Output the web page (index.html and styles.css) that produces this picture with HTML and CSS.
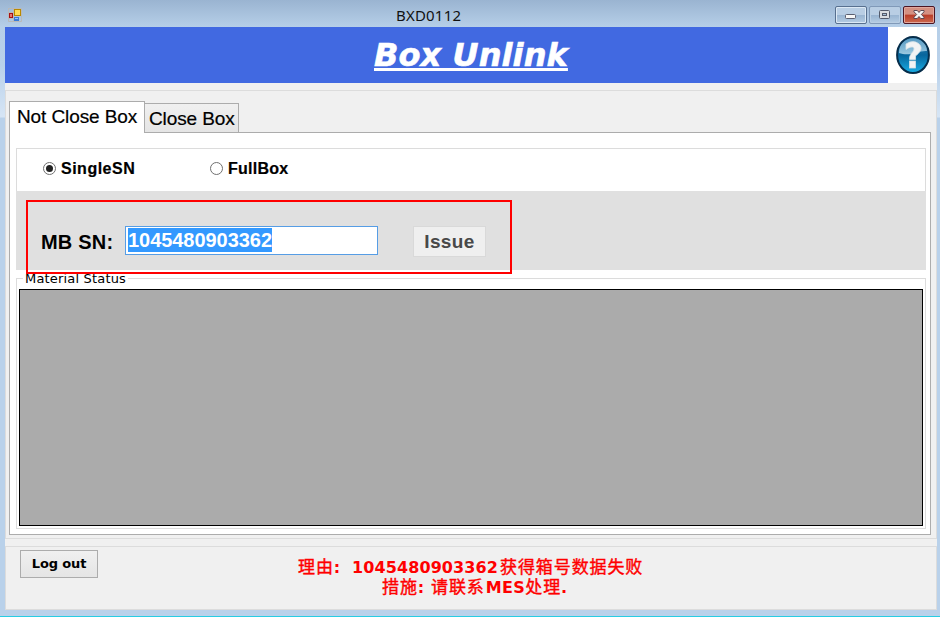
FILE: index.html
```html
<!DOCTYPE html>
<html lang="zh">
<head>
<meta charset="utf-8">
<title>BXD0112</title>
<link rel="stylesheet" href="styles.css">
</head>
<body>
<div class="window">
  <div class="titlebar">
    <svg class="app-icon" width="14" height="14" viewBox="0 0 14 14">
      <path d="M.5 .5h13v13H.5zM5.500 .5v13M.5 4.500h5M.5 10.500h5" fill="none" stroke="#b9b9b9"/>
      <rect x="6.500" y="1.500" width="6" height="6" fill="#ffdc55" stroke="#b98900"/>
      <rect x="1.500" y="5.500" width="3" height="4" fill="#e67a70" stroke="#a80f12"/>
      <rect x="6" y="9" width="5" height="4" fill="#397bd8"/>
      <path d="M7 10.500h3" stroke="#9cc6f5"/>
    </svg>
    <span class="caption">BXD0112</span>
    <div class="controls">
      <span class="control minimize"><svg width="30" height="16" viewBox="0 0 30 16"><rect x="9.500" y="7.500" width="10" height="4" rx="1" fill="#f7f7f7" stroke="#5b5f70"/></svg></span>
      <span class="control maximize"><svg width="30" height="16" viewBox="0 0 30 16"><rect x="9.500" y="3.500" width="10" height="8" rx="1" fill="#d9dce0" stroke="#535a6b"/><rect x="12.500" y="6.500" width="4" height="2" fill="#a9c2da" stroke="#535a6b"/></svg></span>
      <span class="control close"><svg width="30" height="16" viewBox="0 0 30 16"><path d="M10 3.500h3.300l1.700 2 1.700-2H20v1.300L17.300 7.500 20 10.200v1.300h-3.300l-1.700-2-1.700 2H10v-1.300l2.700-2.700L10 4.800z" fill="#f5f5f5" stroke="#5c4853"/></svg></span>
    </div>
  </div>
  <div class="client">
    <header class="banner">
      <h1 class="heading">Box Unlink</h1>
      <div class="help">
        <svg width="34" height="38" viewBox="0 0 34 38">
          <defs>
            <linearGradient id="ball" x1="0" y1="0" x2="0" y2="1"><stop offset="0" stop-color="#4289b5"/><stop offset=".5" stop-color="#07659c"/><stop offset="1" stop-color="#19aee6"/></linearGradient>
            <linearGradient id="shine" x1="0" y1="0" x2="0" y2="1"><stop offset="0" stop-color="#5b9dc5"/><stop offset="1" stop-color="#b6daec"/></linearGradient>
          </defs>
          <ellipse cx="17" cy="19" rx="15.900" ry="18" fill="url(#ball)" stroke="#062d4a" stroke-width="2"/>
          <path d="M3 17C3 8 9 2.500 17 2.500S31 8 31 15C23 14 15 21 3 17z" fill="url(#shine)" opacity=".85"/>
          <path d="M10 8Q17 3.500 22.500 7.500c6 5 0 10-3 12.500v3.500h-6c-.5-5.500 4.500-7.500 4.500-10.500 0-3-4-2.500-8 .5z" fill="#f2f3f4" stroke="#d5e2e9" stroke-width=".8"/>
          <rect x="13.500" y="25" width="6" height="7" fill="#f2f3f4" stroke="#d5e2e9" stroke-width=".8"/>
        </svg>
      </div>
    </header>
    <main class="work">
      <div class="tabs">
        <span class="tab active">Not Close Box</span>
        <span class="tab idle">Close Box</span>
      </div>
      <section class="page">
        <div class="modes">
          <label class="mode"><span class="radio on"></span><span class="mode-text single">SingleSN</span></label>
          <label class="mode"><span class="radio"></span><span class="mode-text">FullBox</span></label>
        </div>
        <div class="entry">
          <span class="entry-label">MB SN:</span>
          <span class="field"><span class="selection">1045480903362</span></span>
          <span class="issue">Issue</span>
          <span class="highlight"></span>
        </div>
        <div class="group">
          <div class="legend"><span class="legend-text">Material Status</span></div>
          <div class="grid"></div>
        </div>
      </section>
    </main>
    <footer class="status">
      <span class="logout">Log out</span>
      <div class="message">
        <div class="line"><span class="prefix">理由<b class="latin">:</b></span><b class="latin">1045480903362</b><span class="cjk">获得箱号数据失败</span></div>
        <div class="line action"><span class="prefix">措施<b class="latin">:</b></span>请联系<b class="latin mes">MES</b>处理<b class="latin">.</b></div>
      </div>
    </footer>
  </div>
</div>
</body>
</html>
```
FILE: styles.css
```css
* { box-sizing: border-box; }
body { margin: 0; color: #000; font-family: "DejaVu Sans", sans-serif; }
.window {
  width: 940px; height: 617px; padding: 0 3px 6px 5px; overflow: hidden;
  border-bottom: 1px solid #27cce2;
  background: linear-gradient(#9ab4d1 0, #b6cfe8 27px, #b9d1ea 65px, #d6e5f5 117px, #b9d1ea 118px);
  white-space: nowrap;
}
.titlebar { height: 27px; display: flex; }
.app-icon { margin: 8px 0 0 3px; flex: none; }
.caption { margin-left: 374px; padding-top: 5px; font: 15px/21px "Noto Sans", sans-serif; width: 68px; color: #111; letter-spacing: .2px; }
.controls { display: flex; margin: 6px 2px 0 auto; gap: 2px; height: 18px; }
.control { border: 1px solid #58708f; border-radius: 2px; width: 32px; box-shadow: inset 0 0 0 1px #dce9f5; background: linear-gradient(#b9cee4 48%, #98b4d1 50%, #b5cce3); }
.control svg { display: block; }
.maximize { border-color: #8099b8; box-shadow: inset 0 0 0 1px #b9cee3; }
.close { border-color: #4c1523; box-shadow: inset 0 0 0 1px #e1a89e; background: linear-gradient(#d49082 45%, #b93c28 50%, #cd6a4f); }
.client { height: 583px; background: #f0f0f0; }
.banner { height: 56px; display: flex; background: #4169e1; }
.heading { margin: 0; width: 883px; padding-left: 369px; color: #fff; font: italic bold 32px/56px "DejaVu Sans", sans-serif; letter-spacing: .1px; -webkit-text-stroke: .6px #fff; text-decoration: underline; text-decoration-thickness: 3px; text-underline-offset: 2px; text-decoration-skip-ink: none; }
.help { width: 49px; background: #fff; padding: 9px 0 0 8px; }
.work { margin-top: 7px; height: 449px; width: 932px; border: 1px solid #dcdcdc; padding: 10px 5px 3px 3px; }
.tabs { display: flex; height: 31px; align-items: flex-end; }
.tab { font: 19px/29px "Liberation Sans", sans-serif; border: 1px solid #acacac; border-bottom: 0; letter-spacing: -.1px; -webkit-text-stroke: .2px #000; }
.active { width: 136px; height: 32px; margin-bottom: -1px; padding-left: 7px; background: #fff; position: relative; }
.idle { width: 94px; height: 29px; padding-left: 4px; background: linear-gradient(#f0f0f0, #e5e5e5); border-left: 0; }
.page { height: 403px; border: 1px solid #acacac; background: #fff; padding: 15px 4px 5px 6px; }
.modes { height: 43px; width: 910px; border: 1px solid #dcdcdc; border-bottom: 0; padding-left: 26px; display: flex; align-items: center; }
.mode { width: 167px; height: 18px; display: flex; align-items: center; margin-top: -3px; }
.radio { width: 13px; height: 13px; border: 1px solid #707070; border-radius: 50%; padding: 2px; background: #fff; margin-right: 5px; }
.on::before { content: ""; display: block; width: 7px; height: 7px; border-radius: 50%; background: #222; }
.mode-text { font: bold 16px/18px "Liberation Sans", sans-serif; letter-spacing: .25px; -webkit-text-stroke: .2px #000; }
.single { letter-spacing: .5px; }
.entry { position: relative; height: 79px; width: 910px; background: #e0e0e0; display: flex; padding: 35px 0 0 25px; }
.entry-label { font: bold 20px/32px "Liberation Sans", sans-serif; letter-spacing: .2px; width: 84px; }
.field { width: 253px; height: 29px; border: 1px solid #569de5; background: #fff; padding: 1px 2px; }
.selection { display: inline-block; height: 24px; background: #39f; color: #fff; font: bold 20px/25px "Liberation Sans", sans-serif; letter-spacing: -.05px; }
.issue { margin-left: 35px; width: 73px; height: 31px; border: 1px solid #d9d9d9; background: #efefef; color: #484848; font: bold 19px/30px "Liberation Sans", sans-serif; letter-spacing: .4px; text-align: center; }
.highlight { position: absolute; left: 10px; top: 9px; width: 486px; height: 74px; border: 2px solid #f00; }
.group { margin-top: 8px; height: 251px; width: 910px; border: 1px solid #dcdcdc; padding: 0 2px 2px; }
.legend { height: 10px; display: flex; }
.legend-text { height: 14px; margin: -7px 0 0 4px; background: #fff; padding: 0 2px; font: 13px/14px "DejaVu Sans", sans-serif; letter-spacing: .18px; }
.grid { height: 237px; width: 904px; background: #ababab; border: 1px solid #000; }
.status { margin-top: 7px; height: 64px; width: 932px; border: 1px solid #dcdcdc; display: flex; padding: 3px 0 0 14px; }
.logout { width: 78px; height: 28px; border: 1px solid #acacac; background: linear-gradient(#f0f0f0, #e5e5e5); font: bold 13px/26px "DejaVu Sans", sans-serif; letter-spacing: -.15px; text-align: center; }
.message { margin-left: 200px; padding-top: 6px; color: #f00; font: 17px/20px "Noto Sans CJK SC", sans-serif; letter-spacing: .9px; -webkit-text-stroke: .4px #f00; }
.line { height: 20px; display: flex; }
.action { margin-left: 84px; }
.prefix { width: 54px; }
.prefix .latin { padding: 0; }
.action .prefix { width: 49px; }
.cjk { padding-left: 2px; }
.latin { font: bold 16px/20px "DejaVu Sans", sans-serif; padding-top: 2px; letter-spacing: .1px; -webkit-text-stroke: 0; }
.mes { padding-left: 1px; letter-spacing: .4px; }
```
